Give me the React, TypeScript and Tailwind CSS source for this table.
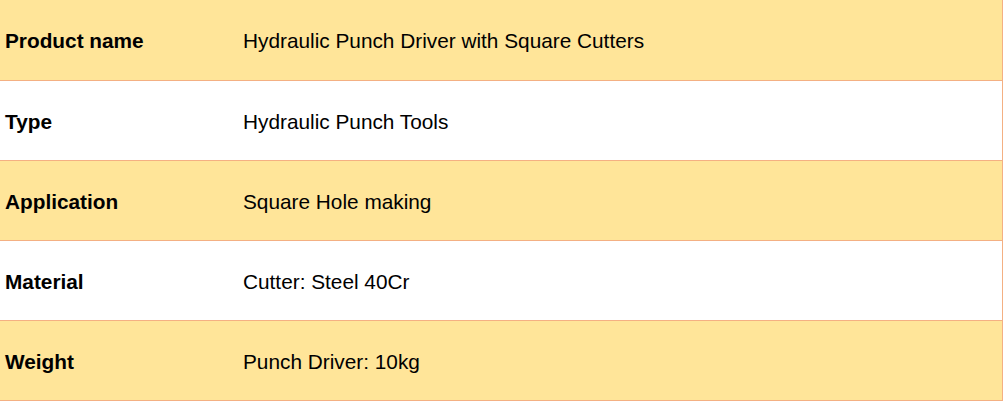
const rows = [
  { label: 'Product name', value: 'Hydraulic Punch Driver with Square Cutters', shaded: true },
  { label: 'Type', value: 'Hydraulic Punch Tools', shaded: false },
  { label: 'Application', value: 'Square Hole making', shaded: true },
  { label: 'Material', value: 'Cutter: Steel 40Cr', shaded: false },
  { label: 'Weight', value: 'Punch Driver: 10kg', shaded: true },
];

const App = () => {
  return (
    <div className="w-[1003px] bg-white font-['Liberation_Sans',Arial,sans-serif] text-[20.8px] leading-[24px] text-black">
      <div className="flex flex-col border-r border-[#f4b083]">
        {rows.map((row, i) => (
          <div
            key={row.label}
            className={`grid grid-cols-[238px_1fr] items-center border-b border-[#f4b083] pt-[2px] ${
              i === 0 ? 'h-[81px]' : 'h-[80px]'
            } ${row.shaded ? 'bg-[#ffe599]' : 'bg-white'}`}
          >
            <div className="pl-[5px] font-bold">{row.label}</div>
            <div className="pl-[5px]">{row.value}</div>
          </div>
        ))}
      </div>
    </div>
  );
};

export default App;
